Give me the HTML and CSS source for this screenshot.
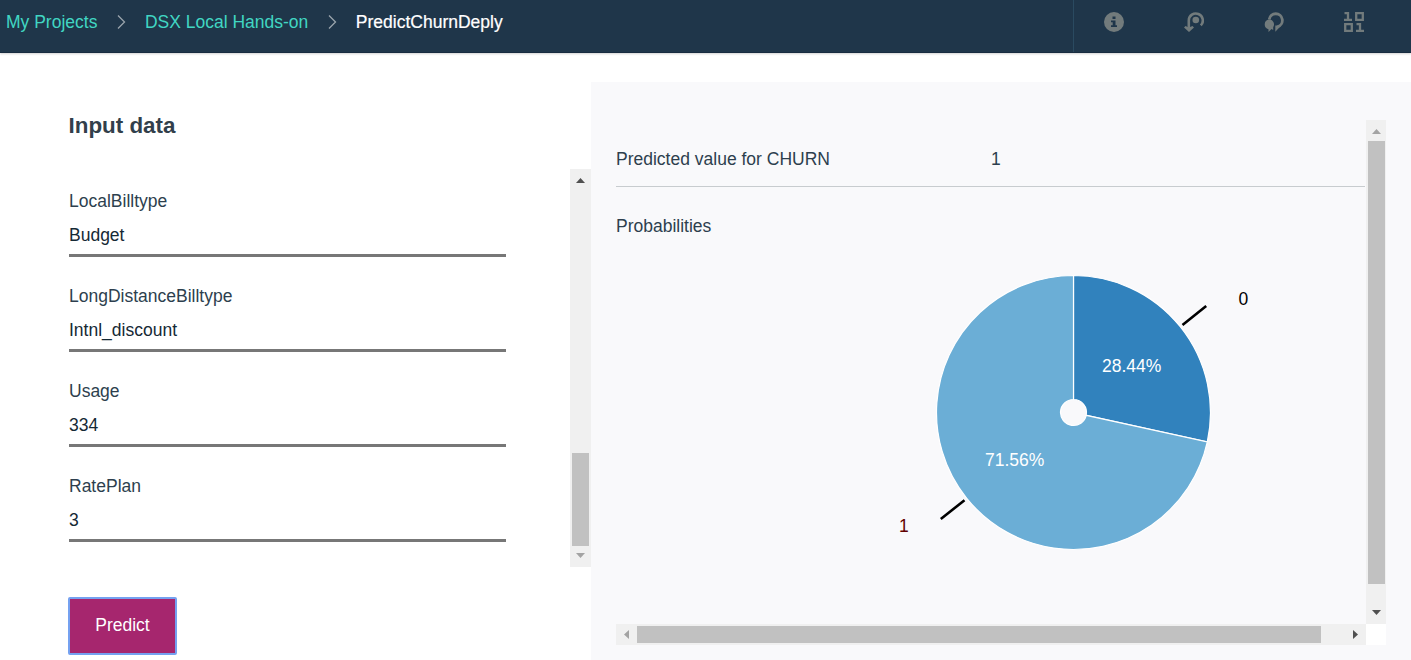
FILE: index.html
```html
<!DOCTYPE html>
<html lang="en">
<head>
<meta charset="utf-8">
<title>PredictChurnDeply</title>
<link rel="stylesheet" href="styles.css">
</head>
<body>
<header class="topbar">
  <nav class="crumbs">
    <a class="crumb">My Projects</a>
    <svg class="chevron" width="9" height="14" viewBox="0 0 9 14"><path d="M1 .5 7.500 7 1 13.500"/></svg>
    <a class="crumb">DSX Local Hands-on</a>
    <svg class="chevron" width="9" height="14" viewBox="0 0 9 14"><path d="M1 .5 7.500 7 1 13.500"/></svg>
    <span class="crumb current">PredictChurnDeply</span>
  </nav>
  <div class="tools">
    <svg width="20" height="20" viewBox="0 0 20 20"><circle cx="10" cy="10" r="10" fill="#727b7c"/><path d="M8.500 4.500h3v2.500h-3zM7 8.500h4.500v4.700H13V15H7v-1.800h1.700v-2.900H7z" fill="#1f364a"/></svg>
    <svg width="20" height="20" viewBox="0 0 20 20"><path d="M4.800 17V8.500a7 7 0 1 1 12 4.900" fill="none" stroke="#727b7c" stroke-width="2.600"/><circle cx="11.800" cy="8" r="3.300" fill="#727b7c"/><path d="M0 15.500 1.500 14l3.300 1.500L8.500 14l1.500 1.500L5 20z" fill="#727b7c"/></svg>
    <svg width="20" height="20" viewBox="0 0 20 20"><path d="M5.200 7.500a6.600 6.600 0 1 1 8.300 7.200" fill="none" stroke="#727b7c" stroke-width="2.800"/><path d="M5 7.500a5 5 0 0 1 4.200 7.700V18l-1.700-1L4.500 20v-2.700A5 5 0 0 1 5 7.500zM11.300 13.500h6l-6 6.300z" fill="#727b7c"/></svg>
    <svg width="20" height="20" viewBox="0 0 20 20" fill="none" stroke="#727b7c" stroke-width="2.300"><path d="M.5 1.200H4v6.300M0 7.900h8M12.200 1.200h6.600v6.600h-6.600zM1.200 12.200h6.600v6.600H1.200zM12.500 12.200H16v6.300M12 18.900h8"/></svg>
  </div>
</header>
<main class="workspace">
  <section class="input-panel">
    <h1 class="title">Input data</h1>
    <div class="form-scroll">
      <div class="fields">
        <div class="field"><label class="label">LocalBilltype</label><div class="value">Budget</div></div>
        <div class="field"><label class="label">LongDistanceBilltype</label><div class="value">Intnl_discount</div></div>
        <div class="field"><label class="label">Usage</label><div class="value">334</div></div>
        <div class="field"><label class="label">RatePlan</label><div class="value">3</div></div>
      </div>
      <div class="vbar form-bar">
        <svg class="arrow" width="9" height="5" viewBox="0 0 9 5"><path d="M0 5 4.500 0 9 5z" fill="#505050"/></svg>
        <div class="thumb form-thumb"></div>
        <svg class="arrow" width="9" height="5" viewBox="0 0 9 5"><path d="M0 0 4.500 5 9 0z" fill="#a3a3a3"/></svg>
      </div>
    </div>
    <button class="predict">Predict</button>
  </section>
  <section class="result-panel">
    <div class="result-view">
      <div class="result-row"><span class="result-name">Predicted value for CHURN</span><span>1</span></div>
      <h2 class="subhead">Probabilities</h2>
      <svg class="pie" width="750" height="374" viewBox="616 250 750 374">
        <g stroke="#fff" stroke-width="1.200">
          <path fill="#3182bd" d="M1073.500 275.500A137 137 0 0 1 1207.300 441.900L1086.200 415.300A13 13 0 0 0 1073.500 399.500z"/>
          <path fill="#6baed6" d="M1207.300 441.900A137 137 0 1 1 1073.500 275.500V399.500A13 13 0 1 0 1086.200 415.300z"/>
        </g>
        <path d="M1182.500 325 1206.200 306M964.500 500.200 940.800 519" stroke="#000" stroke-width="2.600"/>
        <text class="share" x="1102" y="372">28.44%</text>
        <text class="share" x="985" y="466">71.56%</text>
        <text x="1238.500" y="305">0</text>
        <text x="899" y="532" fill="#600000">1</text>
      </svg>
    </div>
    <div class="vbar">
      <svg class="arrow" width="9" height="5" viewBox="0 0 9 5"><path d="M0 5 4.500 0 9 5z" fill="#a3a3a3"/></svg>
      <div class="thumb result-thumb"></div>
      <svg class="arrow" width="9" height="5" viewBox="0 0 9 5"><path d="M0 0 4.500 5 9 0z" fill="#505050"/></svg>
    </div>
    <div class="hbar">
      <svg width="5" height="9" viewBox="0 0 5 9"><path d="M5 0 0 4.500 5 9z" fill="#a3a3a3"/></svg>
      <div class="hthumb"></div>
      <svg width="5" height="9" viewBox="0 0 5 9"><path d="M0 0 5 4.500 0 9z" fill="#505050"/></svg>
    </div>
    <div class="corner"></div>
  </section>
</main>
</body>
</html>
```

FILE: styles.css
```css
* { box-sizing: border-box; }
body {
  margin: 0;
  height: 660px;
  overflow: hidden;
  background: #fff;
  color: #2d3f4e;
  font: 17.5px/20px "Liberation Sans", Arial, sans-serif;
}
svg { display: block; flex: none; }

.topbar {
  display: flex;
  justify-content: space-between;
  height: 53px;
  background: #1f364a;
  border-bottom: 1px solid #182c40;
  box-shadow: 0 1px 2px rgba(0, 0, 0, .18);
}
.crumbs { display: flex; padding: 12px 0 0 6px; white-space: nowrap; }
.crumb { color: #41d6c3; }
.current { color: #fff; -webkit-text-stroke: .2px #fff; }
.chevron { margin: 3px 19px 0 19.500px; fill: none; stroke: #9aa4ac; stroke-width: 1.3; }
.tools {
  display: flex;
  gap: 60px;
  width: 338px;
  padding: 12px 0 0 30px;
  border-left: 1px solid #2a4a60;
}

.workspace { display: flex; height: 607px; }
.input-panel { width: 591px; padding-top: 60px; }
.title { margin: 0 0 30px 68.500px; font-size: 22.4px; line-height: 26px; color: #323f4b; }
.form-scroll { display: flex; justify-content: space-between; height: 398px; padding-left: 69px; }
.fields { display: flex; flex-direction: column; gap: 29px; width: 437px; padding-top: 22px; }
.label { display: block; margin-bottom: 14px; }
.value { height: 32px; border-bottom: 3px solid #777; color: #152935; }
.predict {
  display: block;
  width: 109px;
  height: 58px;
  margin: 30px 0 0 68px;
  padding: 0 0 2px;
  border: 2px solid #75a1f0;
  border-radius: 2px;
  background: #a6266e;
  color: #fff;
  font: inherit;
}

.vbar { display: flex; flex-direction: column; align-items: center; justify-content: space-between; padding: 9px 0; background: #f0f0f0; }
.form-bar { width: 21px; }
.thumb { width: 17px; background: #c1c1c1; }
.form-thumb { height: 93px; margin: 270px 0 7px; }
.result-thumb { height: 443px; margin: 7px 0 26px; }

.result-panel {
  display: grid;
  grid-template: 504px 21px / 750px 20px;
  width: 820px;
  height: 578px;
  margin-top: 29px;
  padding: 38px 25px;
  background: #f9f9fb;
}
.result-view { padding-top: 29px; overflow: hidden; }
.result-row { display: flex; width: 749px; height: 38px; border-bottom: 1px solid #c8cccf; }
.result-name { width: 375px; }
.subhead { margin: 29px 0 14px; font: inherit; }
.pie { font-size: 17.5px; }
.share { fill: #fff; }
.hbar { display: flex; align-items: center; justify-content: space-between; padding: 0 8px; background: #f0f0f0; }
.hthumb { width: 684px; height: 17px; margin: 0 32px 0 8px; background: #c1c1c1; }
.corner { background: #fff; }
```
